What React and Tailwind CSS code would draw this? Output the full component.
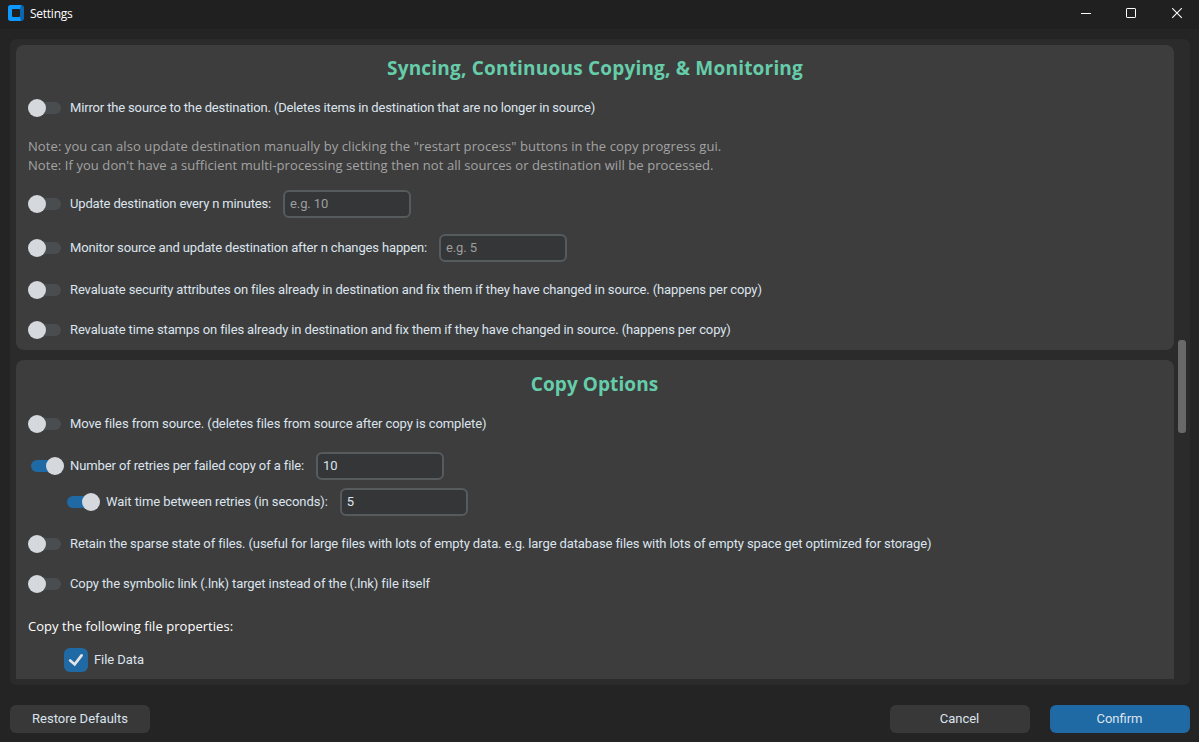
import { useState } from "react";

function Toggle({ initial = false }) {
  const [on, setOn] = useState(initial);
  return (
    <button
      role="switch"
      aria-checked={on}
      aria-label="Toggle option"
      onClick={() => setOn(!on)}
      className={
        "relative flex h-[18px] w-9 shrink-0 items-center justify-center " +
        (on ? "text-[#1f6aa5]" : "text-[#4a4d50]")
      }
    >
      <span className="h-3 w-[30px] rounded-full bg-current" />
      <span
        className={
          "absolute top-0 size-[18px] rounded-full bg-[#d5d9de] " + (on ? "right-0" : "left-0")
        }
      />
    </button>
  );
}

function Row({ label, on, className = "", textClass = "", children }) {
  return (
    <div className={"flex h-7 items-center " + className}>
      <Toggle initial={on} />
      <span className={"ml-1.5 whitespace-nowrap pb-px " + textClass}>{label}</span>
      {children}
    </div>
  );
}

function Field({ className = "", ...props }) {
  return (
    <input
      aria-label="Value"
      className={
        "h-7 w-32 rounded-md border-2 border-[#565b5e] bg-[#343638] px-[5px] pb-px text-[13px] tracking-[-0.1px] text-[#dce4ee] outline-none placeholder:text-[#9e9e9e] " +
        className
      }
      {...props}
    />
  );
}

function Heading({ children, className = "" }) {
  return (
    <h2
      className={
        "text-center font-['Open_Sans','Noto_Sans',sans-serif] text-[19px] font-bold text-[#66cdaa] " +
        className
      }
    >
      {children}
    </h2>
  );
}

function TitleBar() {
  return (
    <header className="flex h-[29px] shrink-0 items-start bg-[#202020]">
      <svg className="mt-[5px] ml-2" width="16" height="16" viewBox="0 0 16 16">
        <rect width="16" height="16" rx="3" fill="#0a66b0" />
        <path d="M3 0H13L12 4v8l1 4H3A3 3 0 0 1 0 13V3A3 3 0 0 1 3 0z" fill="#0d99ff" />
        <rect x="4" y="4" width="8" height="8" rx="1" fill="#202020" />
      </svg>
      <h1 className="ml-1.5 font-['Open_Sans','Noto_Sans',sans-serif] text-[12px] leading-[27px] tracking-[-0.25px] text-white">
        Settings
      </h1>
      <div className="mt-2 mr-4 ml-auto flex">
        <svg width="10" height="11" viewBox="0 0 10 11">
          <path d="M0 5.5h10" stroke="#fff" />
        </svg>
        <svg className="ml-[35px]" width="10" height="10" viewBox="0 0 10 10">
          <rect x=".5" y=".5" width="9" height="9" rx=".6" fill="none" stroke="#fff" />
        </svg>
        <svg className="ml-9" width="11" height="11" viewBox="0 0 11 11">
          <path d="M.2.2l9.6 9.6M9.8.2L.2 9.8" stroke="#fff" strokeWidth="1.1" />
        </svg>
      </div>
    </header>
  );
}

function SyncCard() {
  return (
    <section className="h-[305px] shrink-0 rounded-lg bg-[#3d3d3d] px-3">
      <Heading className="h-[49px] leading-[46px] tracking-[0.2px]">
        Syncing, Continuous Copying, &amp; Monitoring
      </Heading>
      <Row
        textClass="tracking-[-0.155px]"
        label="Mirror the source to the destination. (Deletes items in destination that are no longer in source)"
      />
      <div className="mt-[15px] font-['Open_Sans','Noto_Sans',sans-serif] text-[13px] leading-[19px] whitespace-nowrap text-[#a3a3a3]">
        <p className="tracking-[0.085px]">
          Note: you can also update destination manually by clicking the "restart process" buttons in the copy progress gui.
        </p>
        <p className="tracking-[0.075px]">
          Note: If you don't have a sufficient multi-processing setting then not all sources or destination will be processed.
        </p>
      </div>
      <Row className="mt-[15px]" textClass="tracking-[-0.155px]" label="Update destination every n minutes:">
        <Field className="ml-3" placeholder="e.g. 10" />
      </Row>
      <Row
        className="mt-4"
        textClass="tracking-[-0.145px]"
        label="Monitor source and update destination after n changes happen:"
      >
        <Field className="ml-3" placeholder="e.g. 5" />
      </Row>
      <Row
        className="mt-3.5"
        textClass="tracking-[-0.123px]"
        label="Revaluate security attributes on files already in destination and fix them if they have changed in source. (happens per copy)"
      />
      <Row
        className="mt-3"
        textClass="tracking-[-0.125px]"
        label="Revaluate time stamps on files already in destination and fix them if they have changed in source. (happens per copy)"
      />
    </section>
  );
}

function CopyCard() {
  return (
    <section className="mt-2.5 h-[400px] shrink-0 rounded-t-lg bg-[#3d3d3d] px-3">
      <Heading className="h-[50px] pr-px leading-[48px] tracking-[0.08px]">Copy Options</Heading>
      <Row
        textClass="tracking-[-0.09px]"
        label="Move files from source. (deletes files from source after copy is complete)"
      />
      <Row
        on
        className="mt-3.5"
        textClass="tracking-[-0.112px]"
        label="Number of retries per failed copy of a file:"
      >
        <Field className="ml-3" defaultValue="10" />
      </Row>
      <Row on className="mt-2 pl-9" textClass="tracking-[-0.08px]" label="Wait time between retries (in seconds):">
        <Field className="ml-3" defaultValue="5" />
      </Row>
      <Row
        className="mt-3.5"
        textClass="tracking-[-0.112px]"
        label="Retain the sparse state of files. (useful for large files with lots of empty data. e.g. large database files with lots of empty space get optimized for storage)"
      />
      <Row
        className="mt-3"
        textClass="tracking-[-0.105px]"
        label="Copy the symbolic link (.lnk) target instead of the (.lnk) file itself"
      />
      <p className="mt-[18px] font-['Open_Sans','Noto_Sans',sans-serif] text-[13px] leading-5 tracking-[0.045px] text-white">
        Copy the following file properties:
      </p>
      <label className="mt-3 flex h-6 items-center pl-9">
        <span className="flex size-6 items-center justify-center rounded-md bg-[#1f6aa5]">
          <svg width="24" height="24" viewBox="0 0 24 24">
            <path
              d="M6.2 12.4l4.5 4L17.6 7.4"
              fill="none"
              stroke="#e5e5e5"
              strokeWidth="2.7"
              strokeLinecap="round"
            />
          </svg>
        </span>
        <span className="ml-1.5 pb-px tracking-[-0.07px]">File Data</span>
      </label>
    </section>
  );
}

export default function App() {
  return (
    <div className="flex h-[742px] w-[1199px] flex-col overflow-hidden bg-[#242424] font-[Roboto,sans-serif] text-[13px] text-[#dce4ee]">
      <TitleBar />
      <main className="mt-2.5 mr-[9px] ml-2.5 flex h-[646px] shrink-0 rounded-md bg-[#2b2b2b] p-1.5 pr-1">
        <div className="flex w-[1158px] flex-col overflow-hidden">
          <SyncCard />
          <CopyCard />
        </div>
        <div className="ml-1 pt-[295px]">
          <div className="h-[93px] w-2 rounded-[3px] bg-[#696969]" />
        </div>
      </main>
      <footer className="mt-5 mr-[9px] ml-2.5 flex gap-5">
        <button className="mr-auto h-7 w-[140px] rounded-md bg-[#383838] pb-px">Restore Defaults</button>
        <button className="h-7 w-[140px] rounded-md bg-[#383838] pr-px pb-px">Cancel</button>
        <button className="h-7 w-[140px] rounded-md bg-[#1f6aa5] pr-px pb-px">Confirm</button>
      </footer>
    </div>
  );
}
